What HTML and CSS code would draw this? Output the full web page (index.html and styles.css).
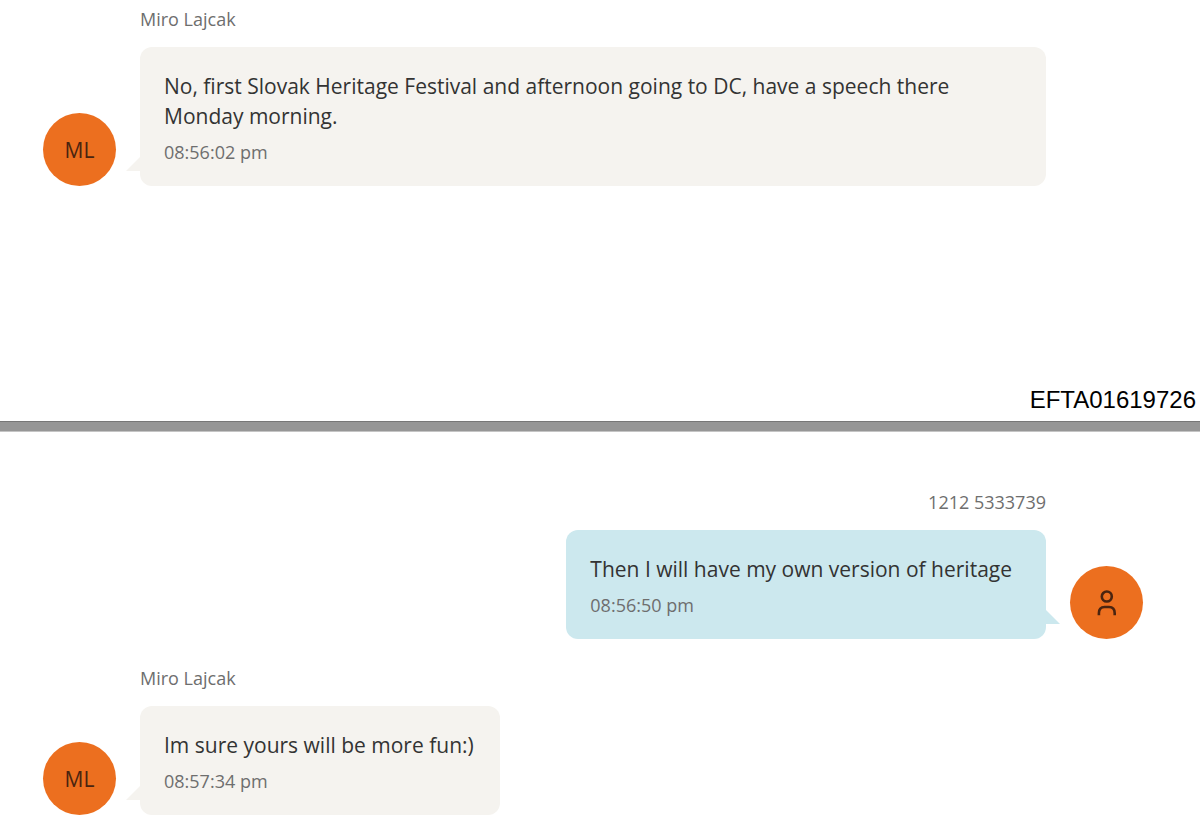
FILE: index.html
```html
<!DOCTYPE html>
<html lang="en">
<head>
  <meta charset="UTF-8" />
  <meta name="viewport" content="width=device-width, initial-scale=1.0">
  <title>Messages - Miro Lajcak</title>
  <link rel="stylesheet" href="styles.css">
</head>
<body>

  <section class="page">
    <div class="message">
      <div class="avatar">ML</div>
      <div class="content">
        <div class="sender">Miro Lajcak</div>
        <div class="bubble">
          <p>No, first Slovak Heritage Festival and afternoon going to DC, have a speech there Monday morning.</p>
          <time>08:56:02 pm</time>
        </div>
      </div>
    </div>
    <div class="page-number">EFTA01619726</div>
  </section>

  <section class="page">
    <div class="message sent">
      <div class="avatar">
        <svg width="20" height="28" viewBox="0 0 20 28" fill="none" stroke="#4a2410" stroke-width="2.6">
          <circle cx="9.8" cy="7.5" r="5" />
          <path d="M1.9 26.2v-2c0-3.8 2.2-6.2 5.7-6.2h4.4c3.5 0 5.7 2.4 5.7 6.2v2" />
        </svg>
      </div>
      <div class="content">
        <div class="sender">1212 5333739</div>
        <div class="bubble">
          <p>Then I will have my own version of heritage</p>
          <time>08:56:50 pm</time>
        </div>
      </div>
    </div>

    <div class="message">
      <div class="avatar">ML</div>
      <div class="content">
        <div class="sender">Miro Lajcak</div>
        <div class="bubble">
          <p>Im sure yours will be more fun:)</p>
          <time>08:57:34 pm</time>
        </div>
      </div>
    </div>
  </section>

</body>
</html>
```
FILE: styles.css
```css
* {
  margin: 0; padding: 0; box-sizing: border-box;
}

body {
  background: #fff;
  color: #333;
  font-family: 'Open Sans', 'Noto Sans', sans-serif;
}

.page {
  display: flex; flex-direction: column;
  gap: 27px;
  padding: 7px 57px 8px 43px;
}

/* grey strip between two pages */
.page + .page {
  padding-top: 59px;
  border-top: 9px solid #969696;
  box-shadow: inset 0 1px 0 #c4c4c4, 0 -1px 0 #777;
}

.message {
  display: flex; align-items: flex-end;
  gap: 24px;
  padding-right: 97px;
}

.message.sent {
  flex-direction: row-reverse;
  padding-right: 0;
}

.content {
  display: flex; flex-direction: column;
  align-items: flex-start;
  gap: 16px;
}

.sent .content { align-items: flex-end; }

.avatar {
  display: flex; align-items: center; justify-content: center;
  flex-shrink: 0;
  width: 73px; height: 73px;
  border-radius: 50%;
  background: #ec6f1f;
  color: #4a2410;
  font-size: 21px;
}

.sender {
  color: #6e6e6e;
  font-size: 18px; line-height: 24px;
}

.bubble {
  position: relative;
  padding: 24px 26px 22px 24px;
  border-radius: 12px;
  background: #f5f3ef;
}

.bubble p { font-size: 21px; line-height: 30px; }

.bubble time {
  display: block;
  margin-top: 9px;
  color: #6e6e6e;
  font-size: 18px; line-height: 24px;
}

/* little tail pointing at the avatar */
.bubble::after {
  content: '';
  position: absolute;
  left: -14px; bottom: 15px;
  width: 14px; height: 14px;
  background: inherit;
  clip-path: polygon(100% 0, 100% 100%, 0 100%);
}

.sent .bubble {
  padding-right: 34px;
  background: #cce8ee;
}

.sent .bubble::after {
  left: auto; right: -14px;
  clip-path: polygon(0 0, 100% 100%, 0 100%);
}

.page-number {
  align-self: flex-end;
  margin: 173px -53px 0 0;
  color: #000;
  font-family: 'Liberation Sans', Arial, sans-serif;
  font-size: 24px; line-height: 28px;
}
```
